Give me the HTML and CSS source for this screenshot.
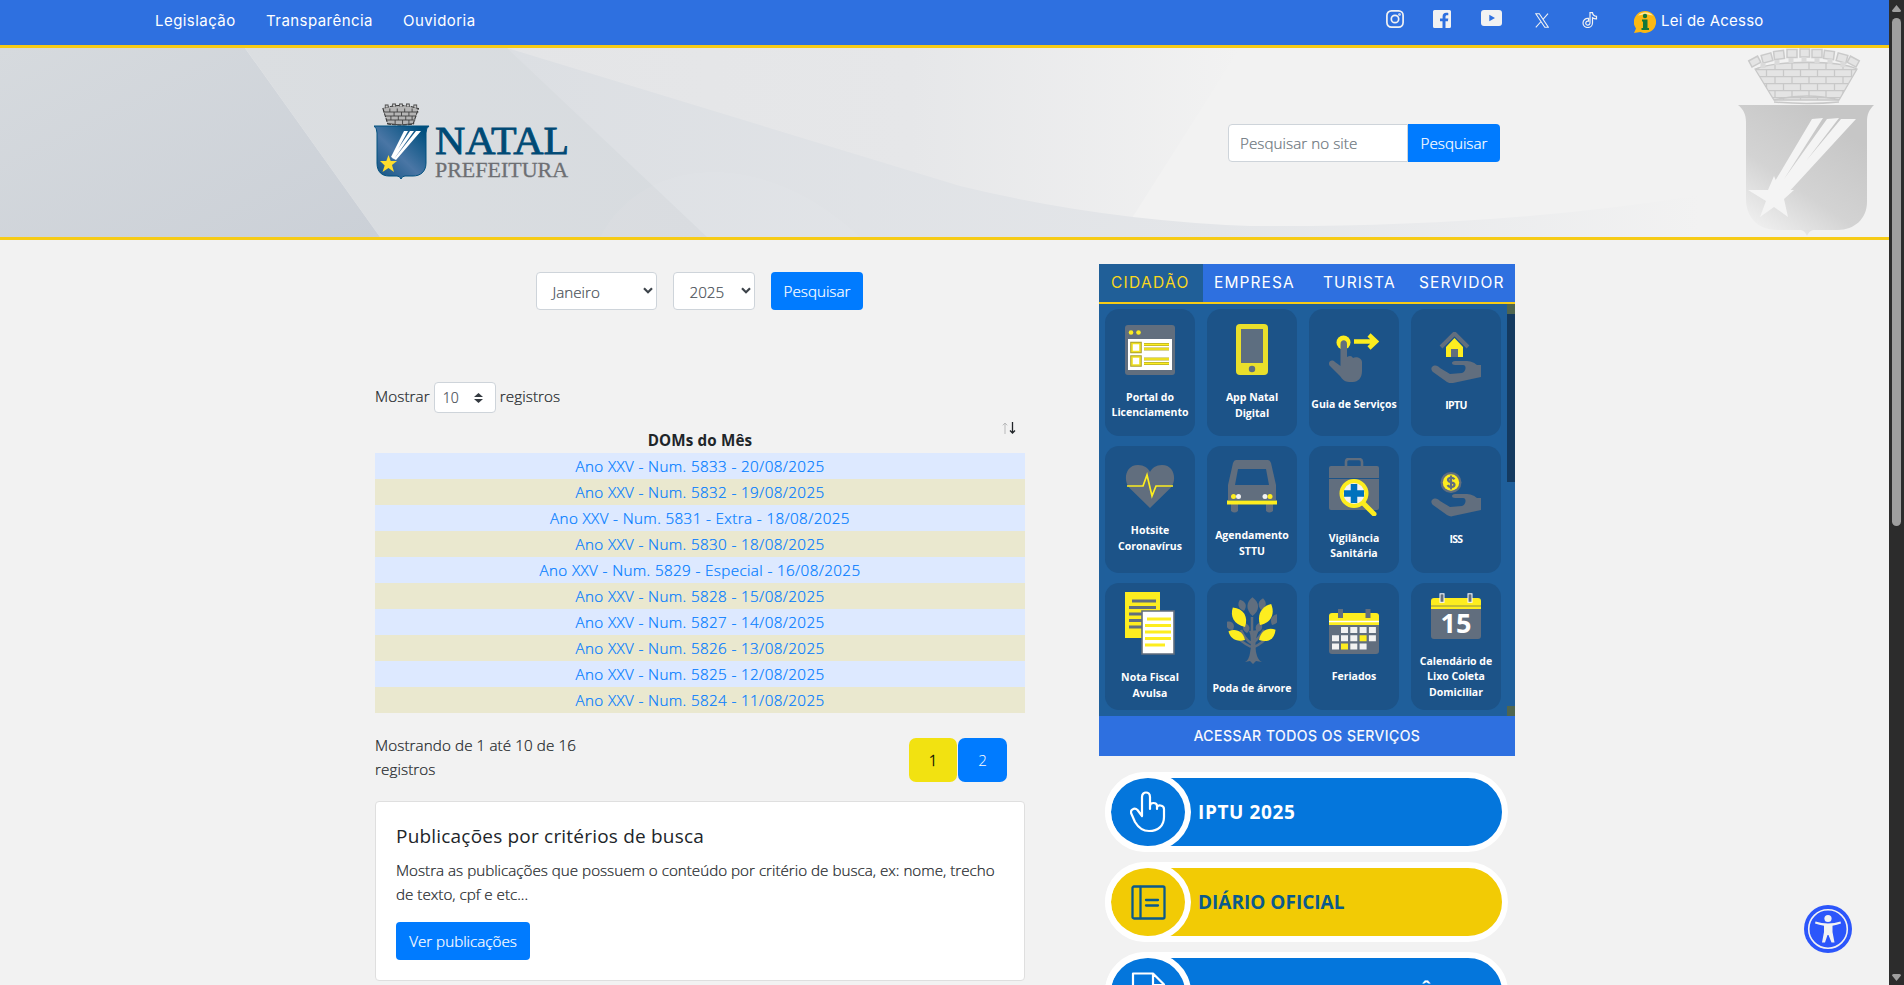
FILE: index.html
```html
<!DOCTYPE html>
<html lang="pt-BR">
<head>
<meta charset="utf-8">
<title>Prefeitura do Natal - Diário Oficial</title>
<link rel="stylesheet" href="styles.css">
</head>
<body>
<svg class="defs" width="0" height="0">
  <defs>
    <linearGradient id="shieldBlue" x1="0" y1="1" x2="1" y2="0"><stop offset="0" stop-color="#0d5080"/><stop offset=".45" stop-color="#4a76a5"/><stop offset=".9" stop-color="#00507f"/></linearGradient>
    <linearGradient id="shieldGray" x1="0" y1="1" x2=".65" y2=".1"><stop offset=".1" stop-color="#f1f1f1"/><stop offset=".5" stop-color="#d3d3d3"/><stop offset="1" stop-color="#c6c6c6"/></linearGradient>
    <pattern id="bricks" width="17" height="14" patternUnits="userSpaceOnUse"><path d="M0 .7H17M0 7.7H17M4 0V7.7M12.500 7.700V14" stroke="#c8c8c8" stroke-width="1.300" fill="none"/></pattern>
    <linearGradient id="fade" x1="0" x2="1"><stop offset="0" stop-color="#dcdfe3"/><stop offset=".6" stop-color="#e4e6e9"/><stop offset="1" stop-color="#f2f2f2"/></linearGradient>
    <linearGradient id="light" x1="0" x2="1"><stop offset="0" stop-color="#e4e5e7"/><stop offset=".55" stop-color="#e6e7e9"/><stop offset="1" stop-color="#f2f2f2"/></linearGradient>
    <linearGradient id="mid" x1="0" x2="1"><stop offset="0" stop-color="#dbdee1"/><stop offset="1" stop-color="#d7dbdf"/></linearGradient>
    <linearGradient id="dark" x1="0" y1="0" x2="1" y2="1"><stop offset="0" stop-color="#d6dade"/><stop offset="1" stop-color="#cbd0d7"/></linearGradient>
    <g id="hand"><path d="M1 33c3-3 6-1 8 1l10 6 12-1c4-1 5-8 1-8H24c-4 0-4-4 0-4h10c6 0 8 1 12 4h4v12l-28 6c-2 1-4 0-6-1L2 38c-2-2-2-4-1-5z" fill="#616e7e"/></g>
    <g id="leaf"><path d="M0 0C-5-6-4-13 0-17 5-12 5-5 0 0z"/></g>
  </defs>
</svg>
<div class="page">
  <div class="topbar">
    <nav class="top-links"><a class="l1">Legislação</a><a class="l2">Transparência</a><a class="l3">Ouvidoria</a></nav>
    <nav class="social">
      <svg class="ig" width="18" height="18" viewBox="0 0 18 18" fill="none" stroke="#f2f2f2" stroke-width="1.700"><rect x=".9" y=".9" width="16.200" height="16.200" rx="4.500"/><circle cx="9" cy="9" r="3.700"/><circle cx="13.500" cy="4.500" r=".5"/></svg>
      <svg class="fb" width="18" height="18" viewBox="0 0 18 18"><path fill="#f2f2f2" d="M1.500 0h15A1.500 1.500 0 0 1 18 1.500v15a1.500 1.500 0 0 1-1.500 1.500h-4v-6.800h2.400l.4-2.700h-2.800V6.700c0-.8.4-1.500 1.600-1.500h1.200V2.900s-1-.2-2.100-.2c-2.200 0-3.600 1.300-3.600 3.700v2.100H7v2.700h2.500V18h-8A1.500 1.500 0 0 1 0 16.500v-15A1.500 1.500 0 0 1 1.500 0z"/></svg>
      <svg class="yt" width="21" height="16" viewBox="0 0 21 16"><path fill="#f2f2f2" fill-rule="evenodd" d="M3 0h15a3 3 0 0 1 3 3v10a3 3 0 0 1-3 3H3a3 3 0 0 1-3-3V3a3 3 0 0 1 3-3zm5.300 4.800v6.400L14 8z"/></svg>
      <svg class="xx" width="14" height="15" viewBox="0 0 14 15" fill="none" stroke="#f2f2f2" stroke-width="1.100"><path d="M.8.700h3.500l9 13.600H9.800zM13 .7 8 6.300M6 8.500.8 14.300"/></svg>
      <svg class="tk" width="16" height="16" viewBox="0 0 16 16" fill="none" stroke="#f2f2f2" stroke-width="1.200"><path d="M8 .6h2.500c.2 2 1.700 3.500 4 3.800v2.500c-1.600 0-3-.5-4-1.200V11c0 6-9.500 6-9.500 0 0-3 2.500-5 5.500-4.600v2.700c-3-.6-3.800 3.600-1 4 1.600.1 2.500-.8 2.500-2.300z"/></svg>
      <svg class="info" width="22" height="22" viewBox="0 0 22 22"><path d="M11 0a11 11 0 1 1-4.500 21L0 22l2-4.500A11 11 0 0 1 11 0z" fill="#fcb813"/><path d="M4 5c3-5 12-5 15 0-3-2-12-2-15 0z" fill="#ffe89a"/><path d="M8 8.500h5.500V17H15v2H7.500v-2H9v-6.500H8z" fill="#13783a"/><circle cx="11" cy="5" r="2.200" fill="#13783a"/></svg>
      <a class="lei">Lei de Acesso</a>
    </nav>
  </div>
  <header class="banner">
    <svg class="banner-bg" width="1889" height="189" viewBox="0 0 1889 189" preserveAspectRatio="none">
      <rect width="1889" height="189" fill="#f2f2f2"/>
      <path d="M507 0H1240L1120 189H507z" fill="url(#light)"/>
      <path d="M507 0 960 138Q1100 172 1250 178 1500 180 1700 147V189H507z" fill="url(#fade)"/>
      <path d="M245 0H507L707 189H380z" fill="url(#mid)"/>
      <path d="M600 189C640 110 760 95 860 189z" fill="#fff" opacity=".05"/>
      <path d="M0 0H245L380 189H0z" fill="url(#dark)"/>
    </svg>
    <svg class="watermark" width="140" height="189" viewBox="0 0 140 189">
      <path d="M18 21 37 52h65l18-31C100 12 42 12 18 21z" fill="#e4e4e4"/>
      <path d="M18 21 37 52h65l18-31C100 12 42 12 18 21z" fill="url(#bricks)" stroke="#c8c8c8" stroke-width="1.300"/>
      <path d="M37 52Q70 44 102 52M37 54Q70 57 102 54" fill="none" stroke="#c8c8c8" stroke-width="1.500"/>
      <g fill="#e4e4e4" stroke="#cacaca" stroke-width="1.500"><rect x="13" y="10" width="10" height="7" transform="rotate(-28 18 14)"/><rect x="25" y="6" width="10" height="8" transform="rotate(-15 30 10)"/><rect x="37" y="3" width="10" height="8" transform="rotate(-7 42 7)"/><rect x="50" y="1.500" width="10" height="8"/><rect x="63" y="1" width="9.500" height="8"/><rect x="75" y="1.500" width="10" height="8"/><rect x="87" y="3" width="10" height="8" transform="rotate(7 92 7)"/><rect x="100" y="6" width="10" height="8" transform="rotate(15 105 10)"/><rect x="111" y="10" width="10" height="7" transform="rotate(28 116 14)"/></g>
      <path d="M26 15v5M40 12v5M54 10v5M67 9v5M80 10v5M93 11v5M106 14v5" stroke="#dadada" stroke-width="5"/>
      <path d="M1 57h136c-5 5-7 9-7 17v80c0 17-13 28-29 28H76q-4 1-6 6-2-5-6-6H40c-20 0-31-14-31-31V74c0-8-3-13-8-17z" fill="url(#shieldGray)"/>
      <path d="m75 71 11-1-46 72-6-2zM90 71l12-1-56 73-6-2zM104 71h15L50 146l-6-3z" fill="#f4f4f4"/>
      <path d="m37 128 6 14h14l-10 9 4 18-14-10-14 10 6-16-18-11h20z" fill="#f4f4f4"/>
    </svg>
    <div class="container banner-inner">
      <svg class="logo" width="196" height="80" viewBox="0 0 196 80">
        <g transform="translate(1 .5) scale(1.060 1)"><path d="M7.500 5 12 20.500q14 2 24 0L41 5Q24-1 7.500 5z" fill="#b5b5b5" stroke="#333" stroke-width="1" stroke-dasharray="4 1"/>
        <path d="M8 8.500h33M10 12.500h29M11 16.500h27M14 5v3.500M21 5v3.500M28 5v3.500M35 5v3.500M18 8.500v4M25 8.500v4M32 8.500v4M15 12.500v4M22 12.500v4M29 12.500v4M35 12.500v4M19 16.500v4M26 16.500v4M32 16.500v4M12 20q12 3 25 0" fill="none" stroke="#444" stroke-width=".9"/>
        <path d="M11 1v3M18 0v3M24.500 0v3M31 0v3M38 1v3" stroke="#444" stroke-width="3.500"/><path d="M11 2v2M18 1v2M24.500 1v2M31 1v2M38 2v2" stroke="#ccc" stroke-width="2"/></g>
        <path d="M0 23h55q-3 2-3 7v30c0 9-6 13-13 13H31q-3 0-4 3-1-3-4-3h-8C8 73 3 69 3 60V30q0-5-3-7z" fill="url(#shieldBlue)" stroke="#00507f" stroke-width="1"/>
        <path d="m30 28 4 0-15 27-2-1zM36 28h4L20 56l-2-1zM42 28h5L22 57l-2-1z" fill="#fff"/>
        <path d="m14.500 52 2.200 6h6.300l-5 4 2 7-5.500-4-6 4 2.200-6.500L6 58h6.300z" fill="#fedd2e"/>
        <text class="logo-a" x="61" y="51" textLength="134" lengthAdjust="spacingAndGlyphs">NATAL</text>
        <text class="logo-b" x="61" y="74" textLength="133" lengthAdjust="spacingAndGlyphs">PREFEITURA</text>
      </svg>
      <form class="search"><div class="search-input">Pesquisar no site</div><div class="btn search-btn">Pesquisar</div></form>
    </div>
  </header>
  <main class="container columns">
    <section class="left">
      <div class="filters">
        <div class="select month"><span>Janeiro</span><svg width="10" height="7" viewBox="0 0 10 7"><path d="m1 1.200 4 4 4-4" fill="none" stroke="#3d444b" stroke-width="2.200"/></svg></div>
        <div class="select year"><span>2025</span><svg width="10" height="7" viewBox="0 0 10 7"><path d="m1 1.200 4 4 4-4" fill="none" stroke="#3d444b" stroke-width="2.200"/></svg></div>
        <div class="btn">Pesquisar</div>
      </div>
      <div class="length"><span>Mostrar</span><div class="mini"><span>10</span><svg width="9" height="10" viewBox="0 0 9 10"><path d="M0 4 4.500 0 9 4zM0 6l4.500 4L9 6z" fill="#343a40"/></svg></div><span>registros</span></div>
      <table class="doms">
        <thead><tr><th>DOMs do Mês<svg class="sort" width="14" height="12" viewBox="0 0 14 12" fill="none"><path d="M3 12V1M.8 3.300 3 1l2.200 2.300" stroke="#b8b9ba"/><path d="M10.500 0v11M8 8.500l2.500 2.500L13 8.500" stroke="#212529" stroke-width="1.300"/></svg></th></tr></thead>
        <tbody>
          <tr><td>Ano XXV - Num. 5833 - 20/08/2025</td></tr>
          <tr><td>Ano XXV - Num. 5832 - 19/08/2025</td></tr>
          <tr><td>Ano XXV - Num. 5831 - Extra - 18/08/2025</td></tr>
          <tr><td>Ano XXV - Num. 5830 - 18/08/2025</td></tr>
          <tr><td>Ano XXV - Num. 5829 - Especial - 16/08/2025</td></tr>
          <tr><td>Ano XXV - Num. 5828 - 15/08/2025</td></tr>
          <tr><td>Ano XXV - Num. 5827 - 14/08/2025</td></tr>
          <tr><td>Ano XXV - Num. 5826 - 13/08/2025</td></tr>
          <tr><td>Ano XXV - Num. 5825 - 12/08/2025</td></tr>
          <tr><td>Ano XXV - Num. 5824 - 11/08/2025</td></tr>
        </tbody>
      </table>
      <div class="table-foot">
        <p class="count">Mostrando de 1 até 10 de 16<br>registros</p>
        <div class="pager"><span class="pg current">1</span><span class="pg">2</span></div>
      </div>
      <article class="card">
        <h5>Publicações por critérios de busca</h5>
        <p>Mostra as publicações que possuem o conteúdo por critério de busca, ex: nome, trecho<br>de texto, cpf e etc...</p>
        <div class="btn wide">Ver publicações</div>
      </article>
    </section>
    <aside class="right">
      <div class="panel">
        <div class="tabs"><span class="tab active">CIDADÃO</span><span class="tab t2">EMPRESA</span><span class="tab t3">TURISTA</span><span class="tab t4">SERVIDOR</span></div>
        <div class="services">
          <div class="grid">
            <div class="svc"><svg width="50" height="50" viewBox="0 0 50 50"><rect width="50" height="50" rx="3" fill="#616e7e"/><circle cx="6" cy="7.500" r="2.300" fill="#fded1f"/><circle cx="13.500" cy="7.500" r="2.300" fill="#fded1f"/><path d="M3 14h44v31H3z" fill="#fff"/><g fill="#fff" stroke="#a9a02c" stroke-width="3.600"><path d="M7 18.500h8v8H7zM7 32h8v8H7z"/></g><g fill="#fff" stroke="#f0e022" stroke-width="1.600"><path d="M7 18.500h8v8H7zM7 32h8v8H7z"/></g><path d="M19 19.500h25M19 24h25M19 34h25M19 38.500h25" stroke="#b5ab2a" stroke-width="3.200"/><path d="M19 19.500h25M19 24h25M19 34h25M19 38.500h25" stroke="#fded1f" stroke-width="1.600"/></svg><span>Portal do<br>Licenciamento</span></div>
            <div class="svc"><svg width="32" height="51" viewBox="0 0 32 51"><rect width="32" height="51" rx="4" fill="#e9df2b"/><path d="M5 5h22v34H5z" fill="#5d6e80"/><circle cx="16" cy="45" r="3.200" fill="#5d6e80"/></svg><span>App Natal<br>Digital</span></div>
            <div class="svc"><svg width="50" height="49" viewBox="0 0 50 49"><circle cx="14.500" cy="9.500" r="7" fill="#fded1f"/><path d="M11.500 11c0-5 6.500-5 6.500 0v13c3-2 5-1 6 1 3-2 9 0 9 4v9c0 7-4 11-9 11h-4c-4 0-7-3-9-6L1 33c-3-3 1-8 5-4l5.500 4z" fill="#616e7e"/><path d="M25 8.500h22M40 2l7 6.500-7 6.500" fill="none" stroke="#fded1f" stroke-width="4.500"/></svg><span>Guia de Serviços</span></div>
            <div class="svc"><svg width="50" height="51" viewBox="0 0 50 51"><path d="m10 15 13.500-13.500L37 15" fill="none" stroke="#616e7e" stroke-width="4"/><path d="m15 15 8.500-9L32 15v10h-5v-8h-7v8h-5z" fill="#fded1f"/><path d="M20 17h7v8h-7z" fill="#616e7e"/><use href="#hand" y="2"/></svg><span class="tight">IPTU</span></div>

            <div class="svc"><svg width="50" height="43" viewBox="0 0 50 43"><path d="M25 43 4.500 23C-2 16 0 0 13 0c6 0 10 3 12 7 2-4 6-7 12-7 13 0 15 16 8.500 23z" fill="#616e7e"/><path d="M2 21h16l4-11 5 21 4-10h17" fill="none" stroke="#fded1f" stroke-width="1.700"/></svg><span>Hotsite<br>Coronavírus</span></div>
            <div class="svc"><svg width="50" height="53" viewBox="0 0 50 53"><path d="M9 0h32q2 0 3 3l5 22v15H1V25L6 3q1-3 3-3z" fill="#616e7e"/><path d="M11 9h28l3 16H8z" fill="#1c5388"/><path d="M4 44h7v7q-3.500 3-7 0zM39 44h7v7q-3.500 3-7 0z" fill="#616e7e"/><path d="M0 40.500h50v4H0z" fill="#fded1f"/><circle cx="6.500" cy="36.500" r="2.500" fill="#fded1f"/><circle cx="11.500" cy="36.500" r="2.500" fill="#f2f2f2"/><circle cx="38" cy="36.500" r="2.500" fill="#f2f2f2"/><circle cx="43" cy="36.500" r="2.500" fill="#fded1f"/></svg><span>Agendamento<br>STTU</span></div>
            <div class="svc"><svg width="50" height="58" viewBox="0 0 50 58"><path d="M17 8V4q0-3 3-3h10q3 0 3 3v4" fill="none" stroke="#616e7e" stroke-width="2.600"/><rect y="8" width="50" height="44" rx="2" fill="#616e7e"/><path d="M0 20.500h50" stroke="#1c5388"/><path d="m35 46 10 10" stroke="#fded1f" stroke-width="5" stroke-linecap="round"/><circle cx="25" cy="35.500" r="12.500" fill="#f2f2f2" stroke="#fded1f" stroke-width="4"/><path d="M25 26v19M15 35.500h20" stroke="#0072bd" stroke-width="6.500"/></svg><span>Vigilância<br>Sanitária</span></div>
            <div class="svc"><svg width="50" height="45" viewBox="0 0 50 45"><circle cx="20" cy="10.500" r="10.500" fill="#616e7e"/><circle cx="20" cy="10.500" r="8.200" fill="#fded1f"/><path d="M23.500 7.200c-2-2.500-7-1.500-6.500 1 .5 2.500 6.500 1.500 6.500 4.500 0 2.500-5 3.500-7 .5M20 3.500v14" fill="none" stroke="#616e7e" stroke-width="2.200"/><use href="#hand" y="-5"/></svg><span class="tight">ISS</span></div>

            <div class="svc"><svg width="50" height="63" viewBox="0 0 50 63"><path d="M0 0h35v46H0z" fill="#fded1f"/><path d="M7 9h24M4 15.500h27M4 22h15M4 28.500h15M4 35h15" stroke="#616e7e" stroke-width="3"/><path d="M17 19h32v43H17z" fill="#fff" stroke="#616e7e" stroke-width="1.600"/><path d="M22 27h24M20 33.500h26M20 40h26M20 46.500h26M20 53h20" stroke="#fded1f" stroke-width="3"/></svg><span>Nota Fiscal<br>Avulsa</span></div>
            <div class="svc"><svg width="50" height="69" viewBox="0 0 50 69"><path d="M22 34q4 8 1 22-1 7-5 9l5-1 3 3 3-3 6 1c-4-2-5-6-6-10q-2-12 3-22" fill="#616e7e"/><path d="M25 50V20M24 46Q18 42 14 33M27 45q5-4 10-12M24 50Q14 45 8 38M27 50q9-4 15-12" fill="none" stroke="#616e7e" stroke-width="2.500"/><g fill="#616e7e"><use href="#leaf" transform="translate(25.500 19) scale(1.500 1.100)"/><use href="#leaf" transform="translate(17 14) rotate(-20) scale(1 .7)"/><use href="#leaf" transform="translate(34 13) rotate(10) scale(1 .7)"/><use href="#leaf" transform="translate(6 33) rotate(-35) scale(1 .6)"/><use href="#leaf" transform="translate(45 28) rotate(25) scale(1 .7)"/><use href="#leaf" transform="translate(20 36) rotate(-10) scale(.9 .6)"/><use href="#leaf" transform="translate(30 35) rotate(20) scale(.9 .6)"/></g><g fill="#fded1f"><use href="#leaf" transform="translate(18 30) rotate(-32) scale(1.700 1.350)"/><use href="#leaf" transform="translate(33 28) rotate(28) scale(1.700 1.400)"/><use href="#leaf" transform="translate(18 43) rotate(-62) scale(1.300 1.100)"/><use href="#leaf" transform="translate(32 43) rotate(58) scale(1.500 1.150)"/></g></svg><span>Poda de árvore</span></div>
            <div class="svc"><svg width="50" height="45" viewBox="0 0 50 45"><path d="M0 12h50v30q0 3-3 3H3q-3 0-3-3z" fill="#616e7e"/><path d="M0 16V7q0-3 3-3h44q3 0 3 3v9z" fill="#fded1f"/><path d="M0 12.500h50" stroke="#fff" stroke-width="1.500"/><path d="M11.500 0v9M39 0v9" stroke="#616e7e" stroke-width="5"/><path fill="#f2f2f2" d="M12 18h7v6h-7zm9.300 0h7v6h-7zm9.300 0h7v6h-7zm9.300 0h7v6h-7zM3 26.300h7v6H3zm9 0h7v6h-7zm9.300 0h7v6h-7zm18.600 0h7v6h-7zM3 34.600h7v6H3zm18.300 0h7v6h-7zm9.300 0h7v6h-7z"/><path d="M30.600 26.300h7v6h-7zM12 34.600h7v6h-7z" fill="#fded1f"/></svg><span>Feriados</span></div>
            <div class="svc"><svg width="50" height="46" viewBox="0 0 50 46"><path d="M0 15h50v28q0 3-3 3H3q-3 0-3-3z" fill="#616e7e"/><path d="M0 16V8q0-3 3-3h44q3 0 3 3v8z" fill="#fded1f"/><path d="M0 13h50" stroke="#c3bd35" stroke-width="1.800"/><rect x="9" y=".8" width="4" height="8.500" fill="#616e7e" stroke="#fff"/><rect x="37" y=".8" width="4" height="8.500" fill="#616e7e" stroke="#fff"/><text class="day" x="25" y="40" text-anchor="middle">15</text></svg><span>Calendário de<br>Lixo Coleta<br>Domiciliar</span></div>
          </div>
          <div class="scroll"><i></i><b></b><i class="end"></i></div>
        </div>
        <div class="all">ACESSAR TODOS OS SERVIÇOS</div>
      </div>
      <div class="pills">
        <div class="pill"><div class="round"><svg width="36" height="42" viewBox="0 0 36 42" fill="none" stroke="#fff" stroke-width="2.200" stroke-linejoin="round" stroke-linecap="round"><path d="M12 25V6c0-6 8-6 8 0v12-3c0-4 7-4 7 0v3-1c0-4 7-3 7 1v8c0 9-6 14-15 14-7 0-11-4-14-9L1.500 23c-2-4 3-7 6-4z"/></svg></div><span class="airy">IPTU 2025</span></div>
        <div class="pill gold"><div class="round"><svg width="35" height="35" viewBox="0 0 35 35" fill="none" stroke="#0a5a8c" stroke-width="2.300" stroke-linecap="round"><rect x="1.500" y="1.500" width="32" height="32" rx="1.500"/><path d="M9.500 2v31M15 15h12M15 20.500h12"/></svg></div><span>DIÁRIO OFICIAL</span></div>
        <div class="pill"><div class="round"><svg width="36" height="40" viewBox="0 0 36 40" fill="none" stroke="#fff" stroke-width="2.200" stroke-linejoin="round"><path d="M3 1.500h20l11 11V38H3zM23 1.500V13h11"/></svg></div><span class="airy">PORTAL DA TRANSPARÊNCIA</span></div>
      </div>
    </aside>
  </main>
</div>
<div class="a11y"><svg width="48" height="48" viewBox="0 0 48 48"><circle cx="24" cy="24" r="24" fill="#2c56fb"/><circle cx="24" cy="24" r="19.300" fill="none" stroke="#f2f2f2" stroke-width="1.600"/><circle cx="24" cy="13.500" r="3.600" fill="#f2f2f2"/><path d="M11.500 16.500q6 2 12.500 2t12.500-2l.5 2q-4 1.500-8.500 2.200V27l2 10.500h-3L24.500 30h-1L21 37.500h-3L20 27v-6.300q-5-.7-9-2.200z" fill="#f2f2f2"/></svg></div>
<div class="winbar"><svg width="9" height="7" viewBox="0 0 9 7"><path d="M4.500 0 9 5.500Q9 7 7.500 7h-6Q0 7 0 5.500z" fill="#9f9f9f"/></svg><div class="thumb"></div><svg class="down" width="9" height="7" viewBox="0 0 9 7"><path d="M4.500 7 9 1.500Q9 0 7.500 0h-6Q0 0 0 1.500z" fill="#9f9f9f"/></svg></div>
</body>
</html>
```
FILE: styles.css
```css
* { box-sizing: border-box; }
body { margin: 0; height: 985px; overflow: hidden; display: flex; background: #f2f2f2; color: #212529; font: 300 15.2px/24px "Open Sans", "Noto Sans", sans-serif; }
p, h5 { margin: 0; }
svg { display: block; flex: none; }
.defs { position: absolute; }
.page { width: 1889px; height: 985px; overflow: hidden; flex: none; }
.container { width: 1140px; margin: 0 auto 0 375px; }

.topbar { height: 48px; background: #2e70e0; border-bottom: 3px solid #f6cb16; display: flex; justify-content: space-between; padding: 0 126px 0 155px; color: #fff; font: 400 15px/24px Inter, sans-serif; letter-spacing: .45px; }
.top-links { display: flex; gap: 30px; padding-top: 9px; white-space: nowrap; }
.l1 { width: 81px; } .l2 { width: 107px; }
.social { display: flex; align-items: flex-start; }
.social svg { margin-top: 10px; }
.social .fb { margin-left: 29px; }
.social .yt { margin-left: 30px; }
.social .xx { margin: 13px 0 0 33px; }
.social .tk { margin: 12px 0 0 33px; }
.social .info { margin: 11px 0 0 36px; }
.lei { margin: 9px 0 0 5px; width: 102px; white-space: nowrap; letter-spacing: .22px; }

.banner { position: relative; height: 192px; border-bottom: 3px solid #f6cb16; }
.banner-bg { position: absolute; left: 0; top: 0; }
.watermark { position: absolute; right: 12px; top: 0; }
.banner-inner { position: relative; display: flex; justify-content: space-between; padding: 55px 15px 0 0; }
.logo { margin-left: -1px; }
.logo-a { font: 41px "Liberation Serif", serif; fill: #004a75; stroke: #004a75; stroke-width: .8; }
.logo-b { font: 21px "Liberation Serif", serif; fill: #6d6f73; stroke: #6d6f73; stroke-width: .3; }
.search { display: flex; margin-top: 21px; height: 38px; }
.search-input { width: 180px; border: 1px solid #ced4da; border-radius: 4px 0 0 4px; background: #fff; color: #6c757d; padding: 6px 11px; letter-spacing: .05px; }
.btn { width: 92px; height: 38px; border-radius: 4px; background: #007bff; color: #fff; text-align: center; line-height: 38px; }
.search-btn { border-radius: 0 4px 4px 0; }
.search-input, .btn, .select, .length, .doms td, .count, .card p { -webkit-text-stroke: .22px currentColor; }

.columns { display: flex; justify-content: space-between; }
.left { width: 650px; padding-top: 32px; }
.right { width: 416px; padding-top: 24px; }
.filters { display: flex; gap: 16px; margin-left: 161px; }
.select { height: 38px; border: 1px solid #ced4da; border-radius: 4px; background: #fff; color: #495057; display: flex; align-items: center; justify-content: space-between; padding: 2px 3px 0 15.500px; }
.select svg { margin-bottom: 3px; }
.month { width: 121px; } .year { width: 82px; }
.length { display: flex; align-items: center; gap: 4px; height: 31px; margin-top: 72px; letter-spacing: .1px; }
.length > span { position: relative; top: -2px; }
.mini { width: 62px; height: 31px; border: 1px solid #ced4da; border-radius: 4px; background: #fff; color: #495057; display: flex; align-items: center; justify-content: space-between; padding: 0 12px 0 8px; font-size: 14px; }
.doms { width: 650px; border-collapse: collapse; text-align: center; }
.doms th { position: relative; height: 40px; padding: 15px 0 0; font-weight: 700; vertical-align: top; line-height: 25px; letter-spacing: .15px; }
.sort { position: absolute; right: 9px; top: 9px; }
.doms td { height: 26px; padding: 0; color: #007bff; line-height: 26px; background: #dde9ff; letter-spacing: .38px; }
.doms tr:nth-child(even) td { background: #eae8cf; }
.table-foot { display: flex; justify-content: space-between; margin-top: 20px; padding-right: 18px; height: 68px; }
.count { letter-spacing: .1px; }
.pager { display: flex; gap: 1px; margin-top: 5px; }
.pg { width: 49px; height: 44px; border-radius: 7px; background: #007bff; color: #fff; text-align: center; line-height: 44px; }
.current { width: 48px; background: #f2e211; color: #000; -webkit-text-stroke: .3px; }
.card { height: 180px; background: #fff; border: 1px solid #dfdfdf; border-radius: 4px; padding: 21px 20px; white-space: nowrap; }
.card h5 { font: 500 19px/26px "Open Sans", sans-serif; letter-spacing: .2px; }
.card p { margin-top: 9px; }
.wide { width: 134px; margin-top: 16px; }

.panel { background: #1f5f9b; }
.tabs { height: 40px; border-bottom: 2px solid #f6cb16; background: #2e70e0; color: #fff; display: flex; font: 400 15.5px/38px Inter, sans-serif; letter-spacing: 1.1px; white-space: nowrap; }
.tab { flex: none; padding-left: 11px; width: 109px; }
.t3 { width: 96px; } .t4 { width: 107px; }
.active { width: 104px; padding-left: 12px; background: #205f98; color: #f9d71c; letter-spacing: 1.3px; }
.services { height: 412px; display: flex; justify-content: space-between; padding-left: 6px; }
.grid { display: grid; grid-template-columns: repeat(4, 90px); grid-auto-rows: 127px; gap: 10px 12px; padding-top: 5px; }
.svc { background: #1c5388; border-radius: 14px; display: flex; flex-direction: column; align-items: center; justify-content: center; gap: 15px; color: #fff; font: 700 10.5px/15.5px "Open Sans", sans-serif; text-align: center; white-space: nowrap; }
.tight { letter-spacing: -.7px; }
.day { font: 700 27px "Open Sans", sans-serif; fill: #fff; }
.scroll { width: 8px; }
.scroll i { display: block; height: 10px; background: #50664f; }
.scroll b { display: block; height: 168px; background: #143a60; }
.scroll .end { margin-top: 224px; }
.all { height: 40px; background: #2e70e0; color: #fff; text-align: center; font: 400 14px/40px Inter, sans-serif; letter-spacing: .48px; -webkit-text-stroke: .2px; }
.pills { display: flex; flex-direction: column; gap: 10px; padding: 16px 0 0 6px; }
.pill { width: 403px; height: 80px; flex: none; border: 6px solid #fff; border-radius: 40px; background: #0476dc; color: #fff; display: flex; align-items: center; gap: 7px; font: 700 19px/28px "Open Sans", sans-serif; white-space: nowrap; }
.airy { letter-spacing: .6px; }
.round { width: 86px; height: 80px; margin-left: -6px; flex: none; border: 6px solid #fff; border-radius: 50%; display: flex; align-items: center; justify-content: center; }
.gold { background: #f2cb05; color: #0a5a8c; }

.a11y { position: absolute; left: 1804px; top: 905px; }
.winbar { width: 15px; height: 985px; background: #2c2c2c; display: flex; flex-direction: column; align-items: center; padding: 5px 0 4px; }
.thumb { width: 9px; height: 508px; margin-top: 6px; border-radius: 5px; background: #9f9f9f; }
.down { margin-top: auto; }
```
